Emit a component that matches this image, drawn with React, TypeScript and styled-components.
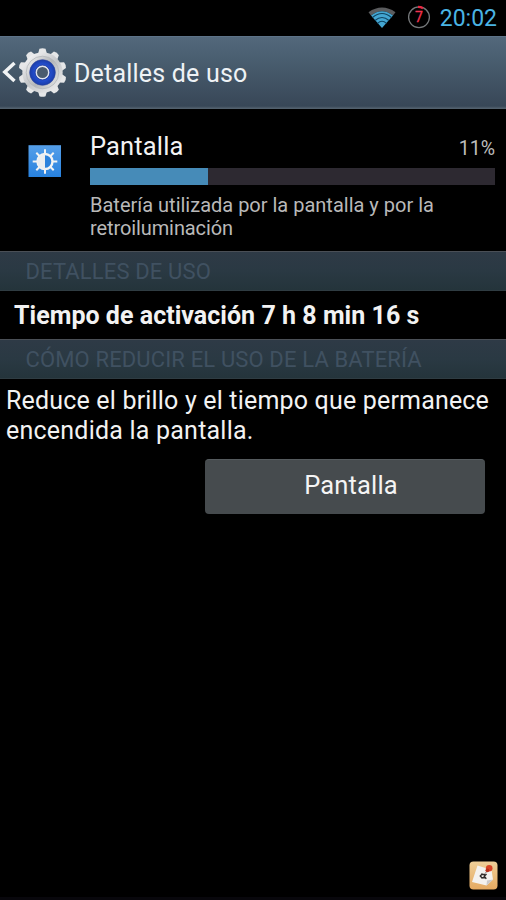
import React from "react";
import styled, { createGlobalStyle } from "styled-components";

const GlobalStyle = createGlobalStyle`
  *, *::before, *::after { box-sizing: border-box; }
  html, body { margin: 0; padding: 0; background: #000; }
`;

const Screen = styled.div`
  position: relative;
  width: 506px;
  height: 900px;
  overflow: hidden;
  background: #000;
  color: #f2f2f2;
  font-family: Roboto, "Liberation Sans", sans-serif;
`;

const Label = styled.span<{ $size: number; $line: number; $spacing?: number; $color?: string; $weight?: number }>`
  display: block;
  white-space: nowrap;
  font-size: ${(p) => p.$size}px;
  line-height: ${(p) => p.$line}px;
  letter-spacing: ${(p) => p.$spacing ?? 0}px;
  color: ${(p) => p.$color ?? "inherit"};
  font-weight: ${(p) => p.$weight ?? 400};
`;

const StatusBar = styled.div`
  display: flex;
  justify-content: flex-end;
  align-items: flex-start;
  height: 36px;
  padding: 4px 9px 0 0;
`;

const WifiIcon = styled.svg`
  width: 30px;
  height: 24px;
  margin: 2px 10px 0 0;
`;

const BatteryIcon = styled.svg`
  width: 24px;
  height: 26px;
  margin-right: 9px;
  font-family: Roboto, sans-serif;
`;

const Header = styled.header`
  display: flex;
  align-items: center;
  height: 73px;
  padding-top: 1px;
  background: linear-gradient(#53687b, #4b6072 25%, #384757 96%, #52606d 99%);
  border-top: 1px solid #5d7388;
`;

const BackIcon = styled.svg`
  width: 17px;
  height: 24px;
  margin-top: -3px;
`;

const GearIcon = styled.svg`
  width: 53px;
  height: 53px;
  margin: -2px 5px 0 -1px;
`;

const Summary = styled.section`
  display: flex;
  height: 142px;
  padding: 22px 11px 0 28px;
`;

const BrightnessIcon = styled.svg`
  flex: none;
  width: 34px;
  height: 33px;
  margin: 14px 28px 0 0;
`;

const SummaryBody = styled.div`
  flex: 1;
`;

const SummaryHeading = styled.div`
  display: flex;
  justify-content: space-between;
  height: 37px;
  align-items: flex-start;
`;

const PercentWrap = styled.div`
  padding-top: 4px;
`;

const Track = styled.div`
  height: 17px;
  margin-bottom: 9px;
  background: #2d2931;
`;

const Fill = styled.div`
  height: 100%;
  background: #468bb8;
`;

const SectionTitle = styled.h2`
  display: flex;
  align-items: center;
  height: 40px;
  margin: 0;
  padding: 2px 0 0 25.5px;
  background: linear-gradient(#2e3a46, #2a3943 50%, #24343b);
  border-top: 1px solid #4a4f56;
  border-bottom: 1px solid #2f3c42;
`;

const UsageRow = styled.div`
  display: flex;
  align-items: center;
  height: 48px;
  padding: 2px 0 0 14px;
`;

const Advice = styled.div`
  height: 80px;
  padding: 7px 0 0 6px;
`;

const ActionButton = styled.button`
  display: flex;
  justify-content: center;
  width: 280px;
  height: 55px;
  margin: 0 21px 0 auto;
  padding: 10px 0 0 12px;
  border: 0;
  border-top: 1px solid #555b5e;
  border-radius: 4px;
  background: #464b4e;
  color: #f4f4f4;
  font-family: inherit;
`;

const NoteBadge = styled.svg`
  position: absolute;
  left: 469px;
  top: 861px;
  width: 29px;
  height: 29px;
`;

const BottomEdge = styled.div`
  position: absolute;
  left: 0;
  right: 0;
  bottom: 0;
  height: 3px;
  background: #08070c;
`;

const TEETH = Array.from({ length: 10 }, (_, i) => i * 36);
const RAYS = Array.from({ length: 8 }, (_, i) => i * 45);

const Wifi = () => (
  <WifiIcon viewBox="0 0 30 24">
    <path d="M1.500 6.200Q15 -3 28.500 6.200L26 9.500Q15 1 4 9.500Z" fill="#5b5c5e" />
    <path d="M4 9.500Q15 1 26 9.500L15 22Z" fill="#44a6d2" />
    <g fill="none" stroke="#0f4460" strokeWidth="1.100">
      <path d="M5.500 11.500Q15 3.500 24.500 11.500" />
      <path d="M8 14.500Q15 8.500 22 14.500" />
      <path d="M10.500 17.300Q15 13.300 19.500 17.300" />
    </g>
  </WifiIcon>
);

const Battery = () => (
  <BatteryIcon viewBox="0 0 24 26">
    <circle cx="12" cy="13.300" r="10.400" fill="none" stroke="#75787a" strokeWidth="1.300" />
    <path d="M11 2.900a10.400 10.400 0 0 1 5 1.300" fill="none" stroke="#ec2742" strokeWidth="2.400" />
    <text x="12" y="18.300" textAnchor="middle" fontSize="14" fill="#f23350" stroke="#f23350" strokeWidth="0.300">7</text>
  </BatteryIcon>
);

const Gear = () => (
  <GearIcon viewBox="0 0 52 52">
    <defs>
      <linearGradient id="metal" x1="0.100" y1="0" x2="0.900" y2="1">
        <stop offset="0" stopColor="#fafafa" />
        <stop offset="0.500" stopColor="#c3c5c8" />
        <stop offset="1" stopColor="#f0f0f0" />
      </linearGradient>
      <linearGradient id="dish" x1="0" y1="0" x2="1" y2="0.700">
        <stop offset="0" stopColor="#f5f5f5" />
        <stop offset="0.600" stopColor="#b4b6b9" />
        <stop offset="1" stopColor="#dcdddd" />
      </linearGradient>
      <radialGradient id="blue">
        <stop offset="0.400" stopColor="#2858e4" />
        <stop offset="1" stopColor="#1b3da9" />
      </radialGradient>
    </defs>
    <g fill="#e6e7e8">
      {TEETH.map((angle) => (
        <path key={angle} d="M21.500 8L23 2.800Q26 1.500 29 2.800L30.500 8Z" transform={`rotate(${angle} 26 26)`} />
      ))}
    </g>
    <circle cx="26" cy="26" r="19.800" fill="url(#metal)" />
    <circle cx="26" cy="26" r="16" fill="url(#dish)" stroke="#b4b7ba" strokeWidth="0.800" />
    <circle cx="26" cy="26" r="12.600" fill="url(#blue)" stroke="#27409b" strokeWidth="0.600" />
    <circle cx="26" cy="26" r="6.200" fill="#4a5b6e" stroke="#dfe3ec" strokeWidth="1.600" />
    <circle cx="26" cy="26" r="7.300" fill="none" stroke="#203a91" strokeWidth="0.700" />
  </GearIcon>
);

const Brightness = () => (
  <BrightnessIcon viewBox="0 0 34 33">
    <defs>
      <linearGradient id="tile" x1="0" y1="0" x2="0" y2="1">
        <stop offset="0" stopColor="#559fe9" />
        <stop offset="1" stopColor="#2882df" />
      </linearGradient>
    </defs>
    <rect x="0.500" y="0.200" width="32.500" height="31.800" fill="url(#tile)" />
    <g stroke="#f2f3f3" strokeWidth="2">
      {RAYS.map((angle) => (
        <path key={angle} d="M17 4.200V9" transform={`rotate(${angle} 17 16.500)`} />
      ))}
    </g>
    <circle cx="17" cy="16.500" r="7.500" fill="#2c82dc" stroke="#f2f3f3" strokeWidth="2.400" />
    <path d="M17 9a7.500 7.500 0 0 0 0 15Z" fill="#eceef0" />
  </BrightnessIcon>
);

const Note = () => (
  <NoteBadge viewBox="0 0 29 29">
    <defs>
      <linearGradient id="cork" x1="0" y1="0" x2="0" y2="1">
        <stop offset="0" stopColor="#efcf98" />
        <stop offset="1" stopColor="#e5aa62" />
      </linearGradient>
    </defs>
    <rect x="0.500" y="0.500" width="28" height="28" rx="4" fill="url(#cork)" />
    <path d="M8.500 4.500L22.500 9 24 18.500 17.500 24.500 3 21Z" fill="#f4f2ef" />
    <path d="M17.500 24.500L18 19.500 24 18.500Z" fill="#cbc9c9" />
    <path d="M13.500 12.500L11.300 15 13.500 17.500M17.500 13L15.200 15.300 17.300 17.800M12 13.500h4M12.500 16.800h4" fill="none" stroke="#302c2b" strokeWidth="1.400" />
    <path d="M18 10.500L15.800 12.500" stroke="#8a8079" strokeWidth="1" />
    <circle cx="20.200" cy="7.300" r="3.300" fill="#d84426" />
    <circle cx="18.400" cy="9.300" r="1.900" fill="#b92f19" />
  </NoteBadge>
);

export default function App() {
  const barShare = 118 / 405;
  return (
    <>
      <GlobalStyle />
      <Screen>
        <StatusBar>
          <Wifi />
          <Battery />
          <Label $size={23} $line={30} $color="#4ab4e4">20:02</Label>
        </StatusBar>
        <Header>
          <BackIcon viewBox="0 0 17 24">
            <path d="M14.500 3L4.800 12 14.500 21" fill="none" stroke="#f1f3f4" strokeWidth="3.500" />
          </BackIcon>
          <Gear />
          <Label $size={25} $line={30} $spacing={0.2} $color="#eef2f5">Detalles de uso</Label>
        </Header>
        <Summary>
          <Brightness />
          <SummaryBody>
            <SummaryHeading>
              <Label $size={25.5} $line={31} $spacing={0.15}>Pantalla</Label>
              <PercentWrap>
                <Label $size={19.5} $line={28} $color="#bdbdbd">11%</Label>
              </PercentWrap>
            </SummaryHeading>
            <Track>
              <Fill style={{ width: `${barShare * 100}%` }} />
            </Track>
            <Label $size={20} $line={22.5} $color="#b9b9b9">Batería utilizada por la pantalla y por la</Label>
            <Label $size={20} $line={22.5} $spacing={-0.1} $color="#b9b9b9">retroiluminación</Label>
          </SummaryBody>
        </Summary>
        <SectionTitle>
          <Label $size={22} $line={28} $spacing={0.14} $color="#405161">DETALLES DE USO</Label>
        </SectionTitle>
        <UsageRow>
          <Label $size={25} $line={30} $spacing={0.03} $weight={700}>Tiempo de activación 7 h 8 min 16 s</Label>
        </UsageRow>
        <SectionTitle>
          <Label $size={22} $line={28} $spacing={0.14} $color="#405161">CÓMO REDUCIR EL USO DE LA BATERÍA</Label>
        </SectionTitle>
        <Advice>
          <Label $size={25} $line={30} $spacing={0.18}>Reduce el brillo y el tiempo que permanece</Label>
          <Label $size={25} $line={30} $spacing={0.22}>encendida la pantalla.</Label>
        </Advice>
        <ActionButton>
          <Label $size={25.5} $line={30} $spacing={0.15}>Pantalla</Label>
        </ActionButton>
        <BottomEdge />
        <Note />
      </Screen>
    </>
  );
}
